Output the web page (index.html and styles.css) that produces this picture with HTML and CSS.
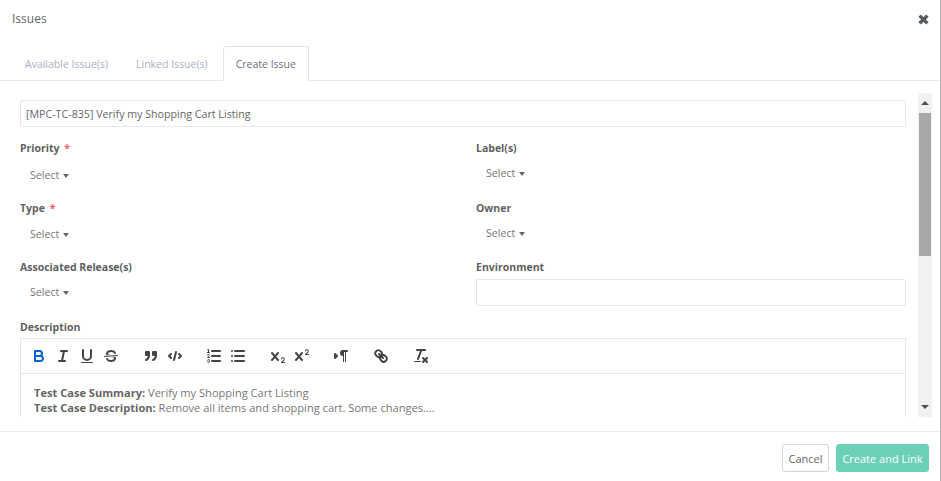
FILE: index.html
```html
<!DOCTYPE html>
<html lang="en">
<head>
<meta charset="utf-8">
<title>Issues</title>
<link rel="stylesheet" href="styles.css">
</head>
<body>
<div class="modal">
  <header class="modal-header">
    <h1 class="modal-title">Issues</h1>
    <svg class="close" viewBox="0 0 10 10" aria-label="Close"><path d="M2 2 8 8M8 2 2 8"/></svg>
  </header>
  <nav class="tabs">
    <a class="tab">Available Issue(s)</a>
    <a class="tab">Linked Issue(s)</a>
    <a class="tab tab-active">Create Issue</a>
  </nav>
  <section class="modal-body">
    <div class="form">
      <input class="field-input" type="text" value="[MPC-TC-835] Verify my Shopping Cart Listing">
      <div class="fields">
        <div class="field">
          <div class="label">Priority <span class="req">*</span></div>
          <div class="select select-low">Select <i class="caret"></i></div>
        </div>
        <div class="field">
          <div class="label">Label(s)</div>
          <div class="select">Select <i class="caret"></i></div>
        </div>
        <div class="field">
          <div class="label">Type <span class="req">*</span></div>
          <div class="select select-mid">Select <i class="caret"></i></div>
        </div>
        <div class="field">
          <div class="label">Owner</div>
          <div class="select">Select <i class="caret"></i></div>
        </div>
        <div class="field">
          <div class="label">Associated Release(s)</div>
          <div class="select">Select <i class="caret"></i></div>
        </div>
        <div class="field">
          <div class="label">Environment</div>
          <input class="field-input env-input" type="text">
        </div>
      </div>
      <div class="label">Description</div>
      <div class="editor">
        <div class="toolbar">
          <span class="group">
            <button class="tool active"><svg viewBox="0 0 18 18"><path d="M5,4H9.5A2.5,2.5,0,0,1,12,6.5v0A2.5,2.5,0,0,1,9.5,9H5V4Z"/><path d="M5,9h5.5A2.5,2.5,0,0,1,13,11.5v0A2.5,2.5,0,0,1,10.5,14H5V9Z"/></svg></button>
            <button class="tool"><svg viewBox="0 0 18 18"><line x1="7" x2="13" y1="4" y2="4"/><line x1="5" x2="11" y1="14" y2="14"/><line x1="8" x2="10" y1="14" y2="4"/></svg></button>
            <button class="tool"><svg viewBox="0 0 18 18"><path d="M5,3V9a4.012,4.012,0,0,0,4,4H9a4.012,4.012,0,0,0,4-4V3"/><rect class="fill" x="3" y="15" width="12" height="1" rx="0.5"/></svg></button>
            <button class="tool"><svg viewBox="0 0 18 18"><line class="thin" x1="15.5" x2="2.5" y1="8.5" y2="9.5"/><path class="fill" d="M9.007,8C6.542,7.791,6,7.519,6,6.5,6,5.792,7.283,5,9,5c1.571,0,2.765.679,2.969,1.309a1,1,0,0,0,1.9-.618C13.356,4.106,11.354,3,9,3,6.2,3,4,4.538,4,6.5a3.2,3.2,0,0,0,.5,1.843Z"/><path class="fill" d="M8.984,10C11.457,10.208,12,10.479,12,11.5c0,.708-1.283,1.5-3,1.5-1.571,0-2.765-.679-2.969-1.309a1,1,0,1,0-1.9.618C4.644,13.894,6.646,15,9,15c2.8,0,5-1.538,5-3.5a3.2,3.2,0,0,0-.5-1.843Z"/></svg></button>
          </span>
          <span class="group">
            <button class="tool"><svg viewBox="0 0 18 18"><rect class="fill solid" height="3" width="3" x="4" y="5"/><rect class="fill solid" height="3" width="3" x="11" y="5"/><path class="solid" d="M7,8c0,4.031-3,5-3,5"/><path class="solid" d="M14,8c0,4.031-3,5-3,5"/></svg></button>
            <button class="tool"><svg viewBox="0 0 18 18"><polyline points="5 7 3 9 5 11"/><polyline points="13 7 15 9 13 11"/><line x1="10" x2="8" y1="5" y2="13"/></svg></button>
          </span>
          <span class="group">
            <button class="tool"><svg viewBox="0 0 18 18"><line x1="7" x2="15" y1="4" y2="4"/><line x1="7" x2="15" y1="9" y2="9"/><line x1="7" x2="15" y1="14" y2="14"/><line class="thin" x1="2.5" x2="4.5" y1="5.5" y2="5.5"/><path class="fill" d="M3.5,6A0.5,0.5,0,0,1,3,5.5V3.085l-0.276.138A0.5,0.5,0,0,1,2.053,3c-0.124-.247-0.023-0.324.224-0.447l1-.5A0.5,0.5,0,0,1,4,2.5v3A0.5,0.5,0,0,1,3.5,6Z"/><path class="thin" d="M4.5,10.5h-2c0-.234,1.85-1.076,1.85-2.234A0.959,0.959,0,0,0,2.5,8.156"/><path class="thin" d="M2.5,14.846a0.959,0.959,0,0,0,1.85-.109A0.7,0.7,0,0,0,3.75,14a0.688,0.688,0,0,0,.6-0.736,0.959,0.959,0,0,0-1.85-.109"/></svg></button>
            <button class="tool"><svg viewBox="0 0 18 18"><line x1="6" x2="15" y1="4" y2="4"/><line x1="6" x2="15" y1="9" y2="9"/><line x1="6" x2="15" y1="14" y2="14"/><line x1="3" x2="3" y1="4" y2="4"/><line x1="3" x2="3" y1="9" y2="9"/><line x1="3" x2="3" y1="14" y2="14"/></svg></button>
          </span>
          <span class="group">
            <button class="tool"><svg viewBox="0 0 18 18"><path class="fill" d="M15.5,15H13.861a3.858,3.858,0,0,0,1.914-2.975,1.8,1.8,0,0,0-1.6-1.751A1.921,1.921,0,0,0,12.021,11.7a0.50013,0.50013,0,1,0,.957.291h0a0.914,0.914,0,0,1,1.053-.725,0.81,0.81,0,0,1,.744.762c0,1.076-1.16971,1.86982-1.93971,2.43082A1.45639,1.45639,0,0,0,12,15.5a0.5,0.5,0,0,0,.5.5h3A0.5,0.5,0,0,0,15.5,15Z"/><path class="fill" d="M9.65,5.241a1,1,0,0,0-1.409.108L6,7.964,3.759,5.349A1,1,0,0,0,2.192,6.59178Q2.21541,6.6213,2.241,6.649L4.684,9.5,2.241,12.35A1,1,0,0,0,3.71,13.70722q0.02557-.02768.049-0.05722L6,11.036,8.241,13.65a1,1,0,1,0,1.567-1.24277Q9.78459,12.3777,9.759,12.35L7.316,9.5,9.759,6.651A1,1,0,0,0,9.65,5.241Z"/></svg></button>
            <button class="tool"><svg viewBox="0 0 18 18"><path class="fill" d="M15.5,7H13.861a4.015,4.015,0,0,0,1.914-2.975,1.8,1.8,0,0,0-1.6-1.751A1.922,1.922,0,0,0,12.021,3.7a0.5,0.5,0,1,0,.957.291,0.917,0.917,0,0,1,1.053-.725,0.81,0.81,0,0,1,.744.762c0,1.077-1.164,1.925-1.934,2.486A1.423,1.423,0,0,0,12,7.5a0.5,0.5,0,0,0,.5.5h3A0.5,0.5,0,0,0,15.5,7Z"/><path class="fill" d="M9.651,5.241a1,1,0,0,0-1.41.108L6,7.964,3.759,5.349a1,1,0,1,0-1.519,1.3L4.683,9.5,2.241,12.35a1,1,0,1,0,1.519,1.3L6,11.036,8.241,13.65a1,1,0,0,0,1.519-1.3L7.317,9.5,9.759,6.651A1,1,0,0,0,9.651,5.241Z"/></svg></button>
          </span>
          <span class="group">
            <button class="tool"><svg viewBox="0 0 18 18"><polygon class="fill solid" points="3 11 5 9 3 7 3 11"/><line x1="15" x2="11" y1="4" y2="4"/><path class="fill" d="M11,3a3,3,0,0,0,0,6h1V3H11Z"/><rect class="fill" height="11" width="1" x="11" y="4"/><rect class="fill" height="11" width="1" x="13" y="4"/></svg></button>
          </span>
          <span class="group">
            <button class="tool"><svg viewBox="0 0 18 18"><line x1="7" x2="11" y1="7" y2="11"/><path d="M8.9,4.577a3.476,3.476,0,0,1,.36,4.679A3.476,3.476,0,0,1,4.577,8.9C3.185,7.5,2.035,6.4,4.217,4.217S7.5,3.185,8.9,4.577Z"/><path d="M13.423,9.1a3.476,3.476,0,0,0-4.679-.36,3.476,3.476,0,0,0,.36,4.679c1.392,1.392,2.5,2.542,4.679.36S14.815,10.5,13.423,9.1Z"/></svg></button>
          </span>
          <span class="group">
            <button class="tool"><svg viewBox="0 0 18 18"><line x1="5" x2="13" y1="3" y2="3"/><line x1="6" x2="9.35" y1="12" y2="3"/><line x1="11" x2="15" y1="11" y2="15"/><line x1="15" x2="11" y1="11" y2="15"/><rect class="fill" height="1" rx="0.5" width="7" x="2" y="14"/></svg></button>
          </span>
        </div>
        <div class="editor-text">
          <p><strong>Test Case Summary:</strong> Verify my Shopping Cart Listing</p>
          <p><strong>Test Case Description:</strong> Remove all items and shopping cart. Some changes....</p>
        </div>
      </div>
    </div>
    <div class="scrollbar">
      <div class="scroll-btn"><i class="arrow arrow-up"></i></div>
      <div class="scroll-thumb"></div>
      <div class="scroll-track"></div>
      <div class="scroll-btn"><i class="arrow arrow-down"></i></div>
    </div>
  </section>
  <footer class="modal-footer">
    <button class="btn btn-cancel">Cancel</button>
    <button class="btn btn-primary">Create and Link</button>
  </footer>
</div>
</body>
</html>
```
FILE: styles.css
```css
* { box-sizing: border-box; }
html, body { margin: 0; padding: 0; height: 100%; overflow: hidden; background: #fff; }
body { font-family: "Open Sans", "Noto Sans", sans-serif; font-size: 10.67px; color: #666; }

.modal {
  width: 941px;
  height: 481px;
  border-right: 1px solid #b4b4b4;
  display: flex;
  flex-direction: column;
}

.modal-header {
  height: 46px;
  padding: 10px 12px 0;
  display: flex;
  justify-content: space-between;
  flex: none;
}
.modal-title { margin: 0; font-size: 12px; line-height: 17px; font-weight: 400; color: #666; }
.close { width: 13px; height: 13px; margin: 3px -2px 0 0; fill: none; stroke: #56595f; stroke-width: 2.6; }

.tabs {
  height: 35px;
  flex: none;
  display: flex;
  padding-left: 12px;
  border-bottom: 1px solid #e9e9e9;
}
.tab {
  height: 35px;
  padding: 0 12px;
  margin-right: 2px;
  font-size: 10.5px;
  line-height: 35px;
  color: #a9b2c0;
  border: 1px solid transparent;
  border-bottom: 0;
  border-radius: 3px 3px 0 0;
  white-space: nowrap;
}
.tab-active { color: #6b6f76; background: #fff; border-color: #e4e4e4; border-bottom: 1px solid #fff; }

.modal-body {
  flex: none;
  height: 336px;
  padding: 12px 0 0 20px;
  display: flex;
  overflow: hidden;
}
.form { width: 886px; height: 324px; padding-top: 7px; overflow: hidden; flex: none; }

.field-input {
  display: block;
  width: 100%;
  height: 27px;
  padding: 0 5px;
  border: 1px solid #e6e6e6;
  border-radius: 2px;
  font: inherit;
  color: #666;
  background: #fff;
  outline: 0;
}

.fields { display: grid; grid-template-columns: 456px 430px; grid-template-rows: 60px 59px 60px; margin-top: 13px; }
.field { min-width: 0; }
.label { font-size: 10.5px; font-weight: 700; line-height: 16px; color: #5f5f5f; }
.req { color: #f2606a; margin-left: 2px; }
.select { margin-top: 9px; padding-left: 10px; line-height: 16px; color: #777; }
.select-low { margin-top: 11px; }
.select-mid { margin-top: 10px; }
.caret {
  display: inline-block;
  margin-left: 1px;
  vertical-align: middle;
  border-top: 4px solid #666;
  border-left: 3.5px solid transparent;
  border-right: 3.5px solid transparent;
}
.env-input { margin-top: 4px; }

.editor { margin-top: 3px; border: 1px solid #e6e6e6; border-bottom: 0; height: 200px; }
.toolbar { height: 35px; padding: 5px 6px; display: flex; border-bottom: 1px solid #e6e6e6; }
.group { display: flex; margin-right: 15.6px; }
.tool {
  width: 24px;
  height: 24px;
  padding: 3px;
  border: 0;
  background: none;
}
.tool svg {
  display: block;
  width: 18px;
  height: 18px;
  fill: none;
  stroke: #444;
  stroke-width: 2;
  stroke-linecap: round;
  stroke-linejoin: round;
}
.tool .fill { fill: #444; stroke: none; }
.tool .solid { fill: #444; stroke: #444; }
.tool .thin { stroke-width: 1; fill: none; }
.tool.active svg { stroke: #06c; }
.editor-text { padding: 11px 13px; font-size: 11.08px; line-height: 15px; color: #777; }
.editor-text p { margin: 0; white-space: nowrap; }
.editor-text strong { color: #666; }

.scrollbar { width: 14px; height: 324px; margin-left: 12px; background: #f1f1f1; display: flex; flex-direction: column; flex: none; }
.scroll-btn { height: 20px; flex: none; display: flex; align-items: center; justify-content: center; }
.scroll-thumb { height: 143px; margin: 0 1px; background: #a8a8a8; flex: none; }
.scroll-track { flex: 1; }
.arrow { border-left: 4px solid transparent; border-right: 4px solid transparent; }
.arrow-up { border-bottom: 4px solid #505050; }
.arrow-down { border-top: 4px solid #505050; }

.modal-footer {
  flex: none;
  height: 50px;
  margin-top: 14px;
  padding: 12px 11px 0 0;
  display: flex;
  justify-content: flex-end;
  align-items: flex-start;
  gap: 7px;
  border-top: 1px solid #ededed;
}
.btn { height: 28px; font: inherit; font-size: 11px; border-radius: 3px; padding: 0; }
.btn-cancel { width: 47px; background: #fff; border: 1px solid #d5d5d5; color: #666; }
.btn-primary { width: 93px; background: #6ccfb8; border: 1px solid #6ccfb8; color: #fff; }
```
